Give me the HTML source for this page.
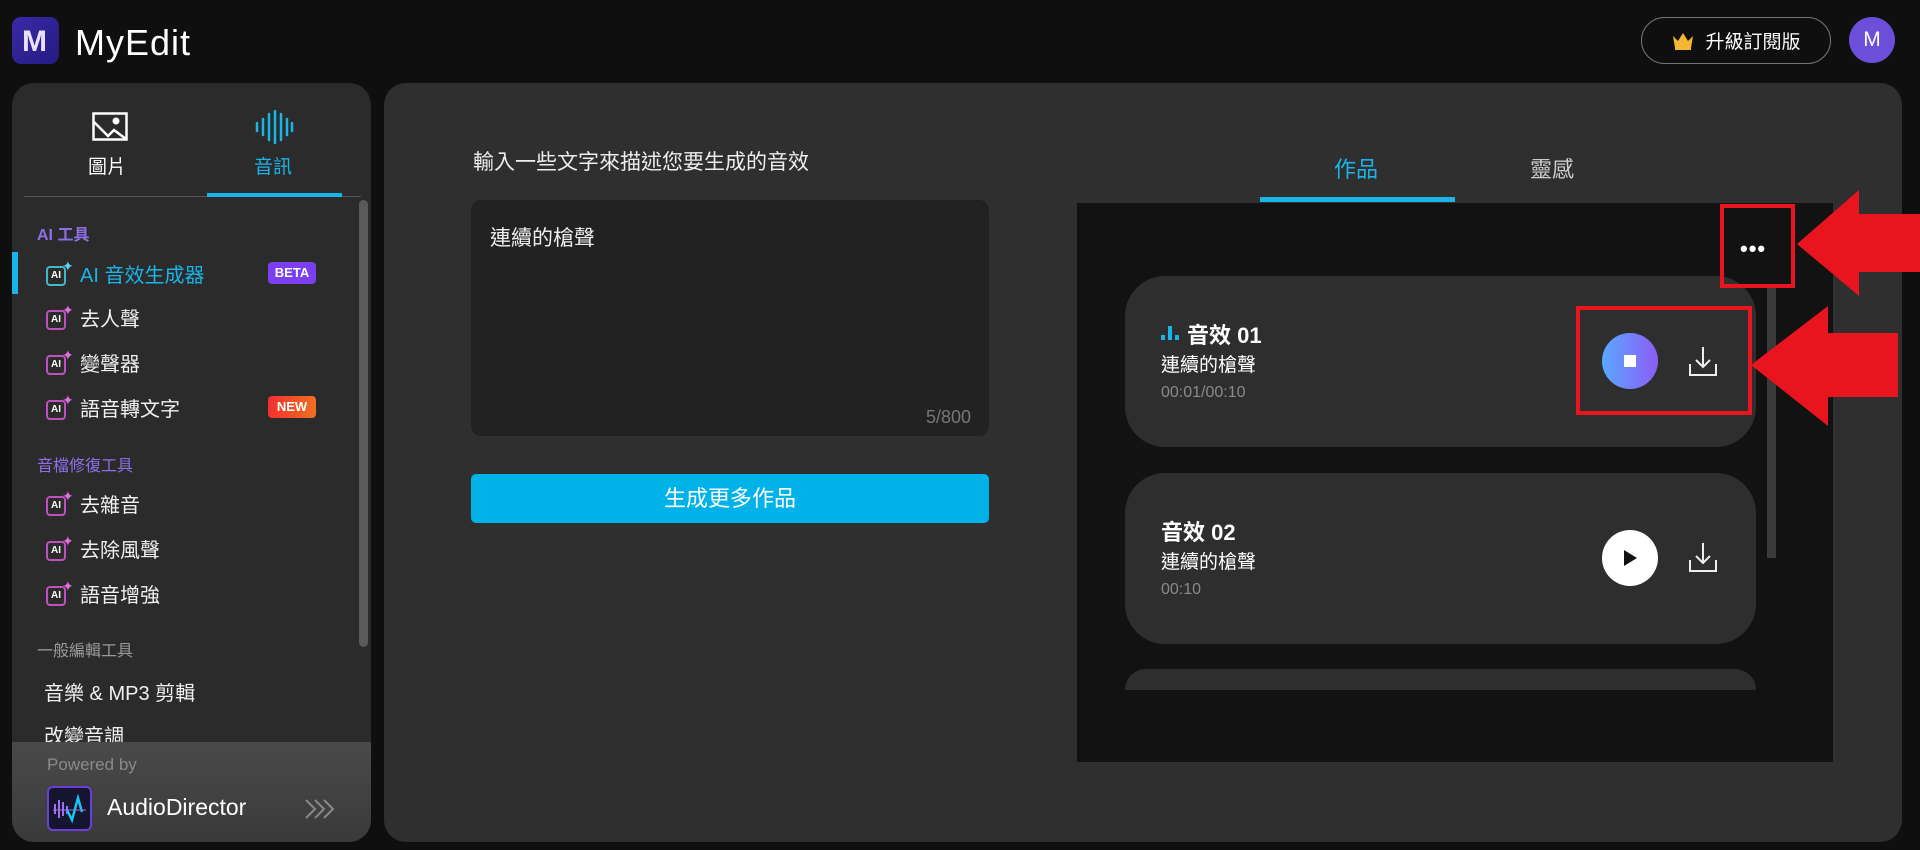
<!DOCTYPE html>
<html><head><meta charset="utf-8"><style>
*{margin:0;padding:0;box-sizing:border-box}
body{width:1920px;height:850px;background:#0f0f0f;font-family:"Liberation Sans","Noto Sans CJK TC",sans-serif;color:#fff;position:relative;overflow:hidden}
.a{position:absolute}
.side{left:12px;top:83px;width:359px;height:759px;background:#2b2b2b;border-radius:22px;overflow:hidden}
.item{position:absolute;left:32px;font-size:20px;color:#f0f0f0;display:flex;align-items:center;gap:6px}
.sec{position:absolute;left:25px;font-size:16px;color:#9a9a9a}
.ai{width:30px;height:28px;position:relative}
.ai .b{position:absolute;left:2px;top:6px;width:20px;height:20px;border:2px solid #c04fc0;border-radius:4px;font-size:10px;font-weight:bold;text-align:center;line-height:16px;color:#fff}
.ai .s{position:absolute;left:18px;top:-2px;color:#e070e0;font-size:14px}
.main{left:384px;top:83px;width:1518px;height:759px;background:#2f2f2f;border-radius:22px}
.card{position:absolute;left:1125px;width:631px;height:171px;background:#2e2e2e;border-radius:40px}
.red{position:absolute;border:4px solid #e8141e}
</style></head><body>
<!-- header -->
<div class="a" style="left:12px;top:17px;width:47px;height:47px;border-radius:9px;background:linear-gradient(135deg,#3a2aa8,#241a80)">
<div style="position:absolute;left:10px;top:8px;font-size:30px;font-weight:bold;color:#e8e0ff">M</div></div>
<div class="a" style="left:75px;top:22px;font-size:36px;letter-spacing:1px">MyEdit</div>
<div class="a" style="left:1641px;top:17px;width:190px;height:47px;border:1px solid #777;border-radius:24px;display:flex;align-items:center;justify-content:center;gap:10px;font-size:19px">
<svg width="24" height="20" viewBox="0 0 24 20"><path d="M2 5l5 5 5-8 5 8 5-5-2 12H4z" fill="#f5b731"/><rect x="4" y="17" width="16" height="2" fill="#f5b731"/></svg>升級訂閱版</div>
<div class="a" style="left:1849px;top:17px;width:46px;height:46px;border-radius:50%;background:#6b4fd8;font-size:21px;text-align:center;line-height:46px">M</div>

<!-- sidebar -->
<div class="a side">
<svg class="a" style="left:80px;top:29px" width="36" height="30" viewBox="0 0 36 30"><rect x="1.5" y="1.5" width="33" height="26" fill="none" stroke="#fff" stroke-width="2.5"/><circle cx="24" cy="9" r="3.5" fill="#fff"/><path d="M2 10l14 14 6-6 12 9" fill="none" stroke="#fff" stroke-width="2.5"/></svg>
<div class="a" style="left:76px;top:69px;font-size:19px">圖片</div>
<svg class="a" style="left:242px;top:27px" width="40" height="34" viewBox="0 0 40 34"><g stroke="#19b5e8" stroke-width="2.5" stroke-linecap="round"><path d="M3 13v8M9 9v16M15 4v26M21 1v32M27 4v26M33 9v16M38 13v8"/></g></svg>
<div class="a" style="left:242px;top:69px;font-size:19px;color:#19b5e8">音訊</div>
<div class="a" style="left:12px;top:113px;width:337px;height:1px;background:#555"></div>
<div class="a" style="left:195px;top:110px;width:135px;height:4px;background:#19b5e8"></div>
<div class="a" style="left:347px;top:117px;width:9px;height:447px;background:#5a5a5a;border-radius:5px"></div>

<div class="sec" style="top:138px;color:#8e6fe8;font-weight:bold">AI 工具</div>
<div class="a" style="left:0;top:169px;width:6px;height:42px;background:#19b5e8"></div>
<div class="item" style="top:176px;color:#19b5e8"><div class="ai"><div class="b" style="border-color:#3fb8c8">AI</div><div class="s" style="color:#5fd0f0">✦</div></div>AI 音效生成器</div>
<div class="a" style="left:256px;top:179px;width:48px;height:22px;background:#7b3ff0;border-radius:4px;font-size:13px;font-weight:bold;text-align:center;line-height:22px">BETA</div>
<div class="item" style="top:220px"><div class="ai"><div class="b">AI</div><div class="s">✦</div></div>去人聲</div>
<div class="item" style="top:265px"><div class="ai"><div class="b">AI</div><div class="s">✦</div></div>變聲器</div>
<div class="item" style="top:310px"><div class="ai"><div class="b">AI</div><div class="s">✦</div></div>語音轉文字</div>
<div class="a" style="left:256px;top:313px;width:48px;height:22px;background:linear-gradient(90deg,#f03030,#f07020);border-radius:4px;font-size:13px;font-weight:bold;text-align:center;line-height:22px">NEW</div>
<div class="sec" style="top:369px;color:#8e6fe8">音檔修復工具</div>
<div class="item" style="top:406px"><div class="ai"><div class="b">AI</div><div class="s">✦</div></div>去雜音</div>
<div class="item" style="top:451px"><div class="ai"><div class="b">AI</div><div class="s">✦</div></div>去除風聲</div>
<div class="item" style="top:496px"><div class="ai"><div class="b">AI</div><div class="s">✦</div></div>語音增強</div>
<div class="sec" style="top:554px">一般編輯工具</div>
<div class="item" style="top:594px">音樂 &amp; MP3 剪輯</div>
<div class="item" style="top:637px">改變音調</div>
<div class="a" style="left:0;top:659px;width:359px;height:100px;background:linear-gradient(#4a4a4a,#3a3a3a)">
<div class="a" style="left:35px;top:13px;font-size:17px;color:#8a8a8a">Powered by</div>
<div class="a" style="left:35px;top:44px;width:45px;height:45px;border:2px solid #6a3fd8;border-radius:6px;background:#151530">
<svg width="41" height="41" viewBox="0 0 41 41"><g stroke="#a070f0" stroke-width="2"><path d="M6 16v10M10 12v18M14 14v14M18 18v8"/></g><path d="M18 22l5 10 6-22 4 14" fill="none" stroke="#19c5f0" stroke-width="2.5"/><path d="M4 22h33" stroke="#a070f0" stroke-width="1"/></svg></div>
<div class="a" style="left:95px;top:52px;font-size:23px">AudioDirector</div>
<svg class="a" style="left:292px;top:56px" width="32" height="22" viewBox="0 0 32 22"><path d="M2 2l9 9-9 9M11 2l9 9-9 9M20 2l9 9-9 9" fill="none" stroke="#888" stroke-width="2"/></svg>
</div>
</div>

<!-- main -->
<div class="a main"></div>
<div class="a" style="left:473px;top:146px;font-size:21px;color:#eee">輸入一些文字來描述您要生成的音效</div>
<div class="a" style="left:471px;top:200px;width:518px;height:236px;background:#222;border-radius:10px">
<div class="a" style="left:19px;top:22px;font-size:21px;color:#eee">連續的槍聲</div>
<div class="a" style="right:18px;bottom:8px;font-size:18px;color:#777">5/800</div></div>
<div class="a" style="left:471px;top:474px;width:518px;height:49px;background:#00b2e8;border-radius:5px;font-size:22px;text-align:center;line-height:49px">生成更多作品</div>

<div class="a" style="left:1334px;top:152px;font-size:22px;color:#19b5e8">作品</div>
<div class="a" style="left:1530px;top:152px;font-size:22px;color:#ccc">靈感</div>
<div class="a" style="left:1260px;top:197px;width:195px;height:5px;background:#19b5e8"></div>
<div class="a" style="left:1077px;top:203px;width:756px;height:559px;background:#121212"></div>
<div class="a" style="left:1767px;top:288px;width:9px;height:270px;background:#3a3a3a"></div>

<div class="card" style="top:276px">
<svg class="a" style="left:36px;top:48px" width="20" height="16"><rect x="0" y="11" width="4" height="5" fill="#19b5e8"/><rect x="7" y="2" width="4" height="14" fill="#19b5e8"/><rect x="14" y="11" width="4" height="5" fill="#19b5e8"/></svg>
<div class="a" style="left:62px;top:42px;font-size:22px;font-weight:bold">音效 01</div>
<div class="a" style="left:36px;top:74px;font-size:19px">連續的槍聲</div>
<div class="a" style="left:36px;top:108px;font-size:16px;color:#8a8a8a">00:01/00:10</div>
<div class="a" style="left:477px;top:57px;width:56px;height:56px;border-radius:50%;background:linear-gradient(90deg,#5aa8ff,#8c5cf5)"><div class="a" style="left:22px;top:22px;width:12px;height:12px;background:#fff"></div></div>
</div>
<div class="card" style="top:473px">
<div class="a" style="left:36px;top:42px;font-size:22px;font-weight:bold">音效 02</div>
<div class="a" style="left:36px;top:74px;font-size:19px">連續的槍聲</div>
<div class="a" style="left:36px;top:108px;font-size:16px;color:#8a8a8a">00:10</div>
<div class="a" style="left:477px;top:57px;width:56px;height:56px;border-radius:50%;background:#fff"><svg class="a" style="left:20px;top:19px" width="18" height="18"><path d="M2 1l13 8-13 8z" fill="#111"/></svg></div>
</div>
<div class="a" style="left:1125px;top:669px;width:631px;height:21px;background:#2e2e2e;border-radius:40px 40px 0 0"></div>
<svg class="a" style="left:1688px;top:345px" width="30" height="32" viewBox="0 0 30 32"><path d="M15 2v20M8 15l7 7 7-7M2 19v11h26V19" fill="none" stroke="#eee" stroke-width="2"/></svg>
<svg class="a" style="left:1688px;top:541px" width="30" height="32" viewBox="0 0 30 32"><path d="M15 2v20M8 15l7 7 7-7M2 19v11h26V19" fill="none" stroke="#eee" stroke-width="2"/></svg>

<!-- dots & annotations -->
<div class="a" style="left:1740px;top:236px;font-size:22px;font-weight:bold;letter-spacing:1px">•••</div>
<div class="red" style="left:1720px;top:204px;width:75px;height:84px"></div>
<div class="red" style="left:1576px;top:306px;width:176px;height:109px"></div>
<svg class="a" style="left:1797px;top:190px" width="123" height="106"><path d="M0 54L62 0V24H123V82H62V106Z" fill="#e8141e"/></svg>
<svg class="a" style="left:1751px;top:306px" width="148" height="120"><path d="M0 59L77 0V27H147V91H77V120Z" fill="#e8141e"/></svg>
</body></html>
